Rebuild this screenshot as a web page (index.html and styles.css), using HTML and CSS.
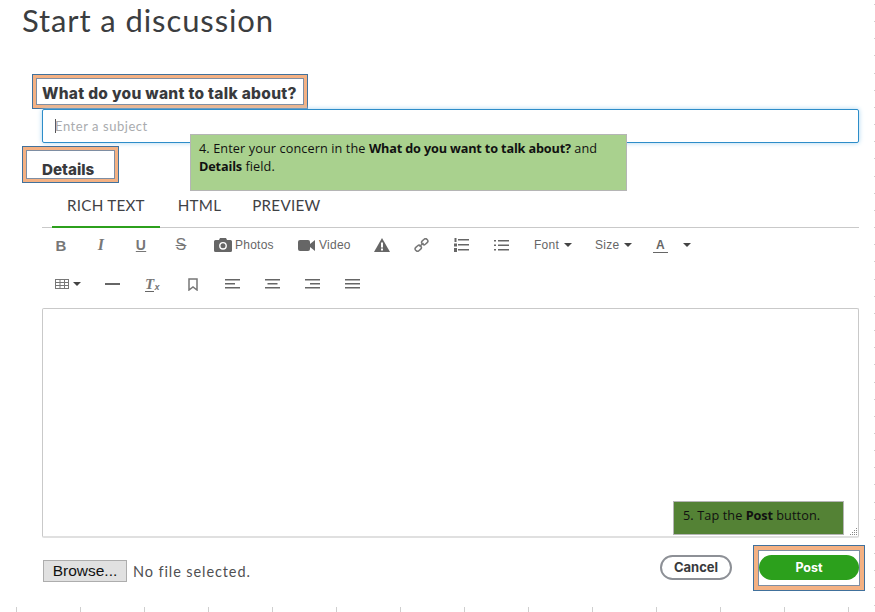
FILE: index.html
```html
<!DOCTYPE html>
<html lang="en">
<head>
<meta charset="utf-8">
<title>Start a discussion</title>
<link rel="stylesheet" href="styles.css">
</head>
<body>
<main class="page">
  <h1 class="title">Start a discussion</h1>
  <div class="subject-label"><span class="hl hl-subject">What do you want to talk about?</span></div>
  <div class="subject-input"><span class="caret"></span><span class="placeholder">Enter a subject</span></div>
  <div class="details-label"><span class="hl hl-details">Details</span></div>

  <nav class="tabs">
    <span class="tab active">RICH TEXT</span>
    <span class="tab">HTML</span>
    <span class="tab">PREVIEW</span>
  </nav>

  <div class="toolbar">
    <span class="tool t-b">B</span>
    <span class="tool t-i">I</span>
    <span class="tool t-u">U</span>
    <span class="tool t-s">S</span>
    <span class="tool t-photos"><svg width="18" height="14" viewBox="0 0 18 14"><path fill="#666" d="M1.500 2H5l1-2h6l1 2h3.500A1.500 1.500 0 0 1 18 3.500v9a1.500 1.500 0 0 1-1.500 1.500h-15A1.500 1.500 0 0 1 0 12.500v-9A1.500 1.500 0 0 1 1.500 2z"/><circle cx="9" cy="7.800" r="3.900" fill="#fff"/><circle cx="9" cy="7.800" r="2.500" fill="#666"/></svg>Photos</span>
    <span class="tool t-video"><svg width="17" height="11" viewBox="0 0 17 11"><rect width="12" height="11" rx="2" fill="#666"/><path fill="#666" d="M12 4l5-4v11l-5-4z"/></svg>Video</span>
    <span class="tool t-warn"><svg width="16" height="14" viewBox="0 0 16 14"><path fill="#666" d="M8 0l8 14H0z"/><rect x="7" y="4.500" width="2" height="5" fill="#fff"/><rect x="7" y="10.500" width="2" height="2" fill="#fff"/></svg></span>
    <span class="tool t-link"><svg width="15" height="14" viewBox="0 0 15 14" fill="none" stroke="#777" stroke-width="1.500"><rect x="7.500" y="1.500" width="6.500" height="4.500" rx="2" transform="rotate(-42 10.750 3.750)"/><rect x="1" y="8" width="6.500" height="4.500" rx="2" transform="rotate(-42 4.250 10.250)"/><path d="M5.500 8.500l4-3.500"/></svg></span>
    <span class="tool t-ol"><svg width="15" height="14" viewBox="0 0 15 14" fill="#666"><rect x="4" y="1" width="11" height="1.500"/><rect x="4" y="6" width="11" height="1.500"/><rect x="4" y="11" width="11" height="1.500"/><rect x="0.500" y="0" width="2" height="4"/><rect x="0" y="5.500" width="3" height="3"/><rect x="0" y="10" width="3" height="4"/></svg></span>
    <span class="tool t-ul"><svg width="15" height="13" viewBox="0 0 15 13" fill="#666"><rect x="4" y="1" width="11" height="1.500"/><rect x="4" y="5.500" width="11" height="1.500"/><rect x="4" y="10" width="11" height="1.500"/><rect x="0" y="1" width="2" height="1.500"/><rect x="0" y="5.500" width="2" height="1.500"/><rect x="0" y="10" width="2" height="1.500"/></svg></span>
    <span class="tool t-font">Font<i class="arrow"></i></span>
    <span class="tool t-size">Size<i class="arrow"></i></span>
    <span class="tool t-color"><span class="color-a">A</span><i class="arrow"></i></span>
  </div>

  <div class="toolbar second">
    <span class="tool t-table"><svg width="14" height="10" viewBox="0 0 14 10" fill="none" stroke="#777"><rect x="0.500" y="0.500" width="13" height="9"/><path d="M0 3.500h14M0 6.500h14M5 0v10M9.500 0v10"/></svg><i class="arrow"></i></span>
    <span class="tool t-hr"><i class="hr-line"></i></span>
    <span class="tool t-clear"><span class="clear-t">T</span><small>x</small></span>
    <span class="tool t-mark"><svg width="10" height="13" viewBox="0 0 10 13" fill="none" stroke="#777" stroke-width="1.500"><path d="M1 1h8v11L5 9l-4 3z"/></svg></span>
    <span class="tool t-al"><svg width="15" height="10" viewBox="0 0 15 10" fill="#666"><rect width="15" height="1.500"/><rect y="4" width="10" height="1.500"/><rect y="8" width="15" height="1.500"/></svg></span>
    <span class="tool t-ac"><svg width="15" height="10" viewBox="0 0 15 10" fill="#666"><rect width="15" height="1.500"/><rect x="2.500" y="4" width="10" height="1.500"/><rect y="8" width="15" height="1.500"/></svg></span>
    <span class="tool t-ar"><svg width="15" height="10" viewBox="0 0 15 10" fill="#666"><rect width="15" height="1.500"/><rect x="5" y="4" width="10" height="1.500"/><rect y="8" width="15" height="1.500"/></svg></span>
    <span class="tool t-aj"><svg width="15" height="10" viewBox="0 0 15 10" fill="#666"><rect width="15" height="1.500"/><rect y="4" width="15" height="1.500"/><rect y="8" width="15" height="1.500"/></svg></span>
  </div>

  <div class="editor">
    <svg class="grip" width="9" height="9" viewBox="0 0 9 9" fill="#888"><rect x="7" y="1" width="1" height="1"/><rect x="5" y="3" width="1" height="1"/><rect x="7" y="3" width="1" height="1"/><rect x="3" y="5" width="1" height="1"/><rect x="5" y="5" width="1" height="1"/><rect x="7" y="5" width="1" height="1"/><rect x="1" y="7" width="1" height="1"/><rect x="3" y="7" width="1" height="1"/><rect x="5" y="7" width="1" height="1"/><rect x="7" y="7" width="1" height="1"/></svg>
  </div>

  <div class="footer">
    <span class="browse">Browse...</span>
    <span class="nofile">No file selected.</span>
    <span class="cancel">Cancel</span>
    <span class="hl hl-post"><span class="post">Post</span></span>
  </div>
  <div class="ticks"></div>
</main>

<aside class="note note-4">4. Enter your concern in the <b>What do you want to talk about?</b> and <b>Details</b> field.</aside>
<aside class="note note-5">5. Tap the <b>Post</b> button.</aside>
</body>
</html>
```
FILE: styles.css
```css
* { box-sizing: border-box; }
html, body { margin: 0; height: 100%; }
body {
  background: #fff;
  overflow: hidden;
  position: relative;
  font-family: "Lato", "Liberation Sans", sans-serif;
  color: #393a3d;
}
.page {
  display: flex;
  flex-direction: column;
  height: 612px;
  padding-left: 42px;
  padding-right: 16px;
  background-image: repeating-linear-gradient(to bottom, transparent 0 4px, #cfcfcf 4px 5px, transparent 5px 17.160px);
  background-size: 1px 100%;
  background-position: 874px 0;
  background-repeat: no-repeat;
}

.title {
  margin: 2px 0 0 -20px;
  height: 39px;
  line-height: 36px;
  font-size: 31px;
  font-weight: 400;
  letter-spacing: 0.900px;
  color: #3b3d40;
}

.hl {
  display: inline-flex;
  background: #fff;
  border: 1px solid #7e8ea3;
  outline: 3px solid #f4b183;
  box-shadow: 0 0 0 4px #41719c;
}
.subject-label { margin: 37px 0 0 -6px; height: 29px; display: flex; }
.hl-subject {
  width: 268px;
  height: 27px;
  align-items: center;
  padding: 3px 0 0 5px;
  font-family: "Inter", "Liberation Sans", sans-serif;
  font-size: 15.500px;
  font-weight: 800;
  letter-spacing: 0.300px;
  white-space: nowrap;
}
.subject-input {
  margin-top: 2px;
  height: 34px;
  border: 1px solid #2d8dc9;
  border-radius: 2px;
  box-shadow: 0 0 5px #a8d4ef;
  display: flex;
  align-items: center;
  padding-left: 12px;
  background: #fff;
}
.caret { width: 1px; height: 14px; background: #555; margin-right: -1px; }
.placeholder { color: #a9abae; font-size: 13px; letter-spacing: 0.550px; }

.details-label { margin: 7px 0 0 -16px; height: 29px; display: flex; }
.hl-details {
  width: 89px;
  height: 29px;
  padding: 9px 0 0 15px;
  font-family: "Inter", "Liberation Sans", sans-serif;
  font-size: 15.200px;
  font-weight: 800;
  line-height: 20px;
}

.tabs {
  margin-top: 13px;
  height: 36px;
  padding-left: 10px;
  display: flex;
  border-bottom: 1px solid #c9c9c9;
  font-size: 15.200px;
  letter-spacing: 0.250px;
}
.tab { padding: 1px 15px 0; line-height: 24px; margin-right: 1px; height: 36px; color: #3f4145; }
.tab.active { border-bottom: 2px solid #2ca01c; margin-right: 3px; }

.toolbar { height: 34px; display: flex; align-items: center; font-size: 12px; color: #666; font-family: "Liberation Sans", sans-serif; letter-spacing: 0.250px; }
.tool { display: inline-flex; align-items: center; flex: none; }
.arrow { width: 0; height: 0; border-left: 4px solid transparent; border-right: 4px solid transparent; border-top: 4px solid #444; margin-left: 5px; }

.t-b, .t-i, .t-u, .t-s { width: 40px; justify-content: center; color: #777; }
.t-b { margin-left: -1px; font-size: 15px; font-weight: 700; }
.t-i { font-family: "Liberation Serif", serif; font-style: italic; font-weight: 700; font-size: 16px; }
.t-u { text-decoration: underline; font-weight: 700; font-size: 14px; }
.t-s { text-decoration: line-through; font-size: 16px; }
.t-photos { margin-left: 13px; gap: 3px; width: 84px; }
.t-video { gap: 4px; width: 76px; }
.t-warn, .t-link, .t-ol, .t-ul { width: 40px; }
.t-font { width: 61px; }
.t-size { width: 58px; }
.color-a { font-weight: 700; border-bottom: 1.500px solid #666; width: 15px; text-align: center; line-height: 14px; }
.t-color .arrow { margin-left: 15px; }

.toolbar.second { height: 44px; padding-left: 13px; }
.t-table { width: 50px; }
.t-table .arrow { margin-left: 4px; }
.t-hr { width: 40px; }
.hr-line { width: 15px; height: 1.500px; background: #666; }
.t-clear { width: 40px; font-family: "Liberation Serif", serif; font-style: italic; font-weight: 700; font-size: 15px; color: #777; }
.clear-t { border-bottom: 1.500px solid #666; line-height: 14px; }
.t-clear small { font-size: 9px; font-family: "Liberation Sans", sans-serif; margin-top: 6px; }
.t-mark { width: 40px; padding-left: 3px; }
.t-al, .t-ac, .t-ar, .t-aj { width: 40px; }

.editor {
  margin-top: 2px;
  height: 230px;
  border: 1px solid #c9c9c9;
  border-bottom: 2px solid #e0e0e0;
  border-radius: 2px;
  position: relative;
}
.grip { position: absolute; right: 0; bottom: 0; }

.footer { margin-top: 12px; height: 36px; display: flex; align-items: center; }
.browse {
  margin: 6px 0 0 1px;
  width: 84px;
  height: 22px;
  background: #e1e1e1;
  border: 1px solid #adadad;
  color: #111;
  font: 15.500px/20px "Liberation Sans", sans-serif;
  text-align: center;
}
.nofile { margin: 7px 0 0 6px; font-size: 14.500px; letter-spacing: 0.900px; color: #4f5052; }
.cancel {
  margin-left: auto;
  margin-right: 26px;
  width: 72px;
  height: 25px;
  margin-top: -1px;
  border: 2px solid #8d9096;
  border-radius: 13px;
  font-family: "Inter", "Liberation Sans", sans-serif;
  font-size: 13px;
  font-weight: 700;
  text-align: center;
  line-height: 21px;
}
.hl-post {
  width: 102px;
  height: 36px;
  margin-right: -1px;
  padding: 4px 0 0;
  outline-width: 4px;
  box-shadow: 0 0 0 5px #41719c;
}
.post {
  width: 100px;
  height: 25px;
  background: #2ca01c;
  border-radius: 13px;
  color: #fff;
  font-family: "Inter", "Liberation Sans", sans-serif;
  font-size: 12.500px;
  font-weight: 700;
  text-align: center;
  line-height: 25px;
}

.ticks {
  margin-top: auto;
  margin-left: -42px;
  margin-right: -16px;
  height: 5px;
  background: repeating-linear-gradient(to right, transparent 0 16px, #cfcfcf 16px 17px, transparent 17px 64px);
}

.note {
  position: absolute;
  border: 1px solid #b5b5b5;
  color: #111;
  font-family: "Open Sans", "Liberation Sans", sans-serif;
  font-size: 12.700px;
  letter-spacing: 0.100px;
  line-height: 18px;
}
.note b { letter-spacing: -0.160px; }
.note-4 { left: 190px; top: 134px; width: 437px; height: 57px; background: #a9d18e; padding: 4px 8px; }
.note-5 { left: 673px; top: 501px; width: 171px; height: 34px; background: #548235; padding: 4px 9px; }
```
